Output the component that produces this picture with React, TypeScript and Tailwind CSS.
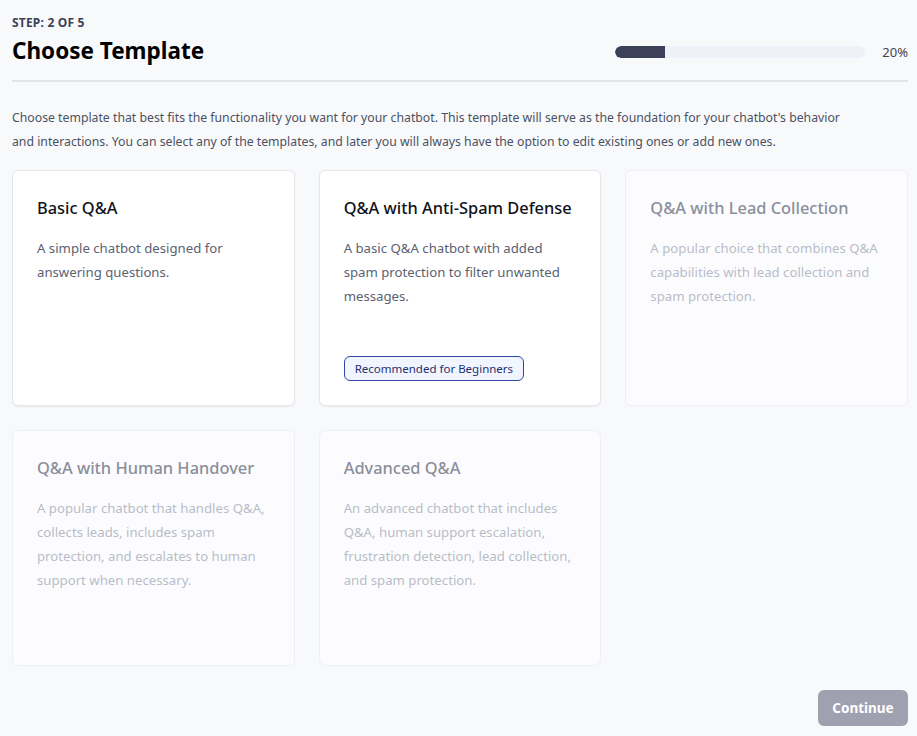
const templates = [
  {
    title: "Basic Q&A",
    description: "A simple chatbot designed for answering questions.",
    enabled: true,
  },
  {
    title: "Q&A with Anti-Spam Defense",
    description: "A basic Q&A chatbot with added spam protection to filter unwanted messages.",
    enabled: true,
    badge: "Recommended for Beginners",
  },
  {
    title: "Q&A with Lead Collection",
    description: "A popular choice that combines Q&A capabilities with lead collection and spam protection.",
    enabled: false,
  },
  {
    title: "Q&A with Human Handover",
    description: "A popular chatbot that handles Q&A, collects leads, includes spam protection, and escalates to human support when necessary.",
    enabled: false,
  },
  {
    title: "Advanced Q&A",
    description: "An advanced chatbot that includes Q&A, human support escalation, frustration detection, lead collection, and spam protection.",
    enabled: false,
  },
];

export default function App() {
  const progress = 20;

  return (
    <div className="min-h-screen bg-[#f8f9fb] font-['Noto_Sans',sans-serif] pl-3 pr-[9px] pt-[15px] pb-[10px]">
      {/* Header */}
      <div className="flex items-end justify-between pb-[14px] border-b-2 border-[#e4e5ea]">
        <div>
          <p className="text-[12px] font-bold uppercase tracking-[0.2px] text-[#3b4257] leading-[16px]">Step: 2 of 5</p>
          <h1 className="text-[22.5px] font-bold text-black leading-[30px] mt-[5px]">Choose Template</h1>
        </div>
        <div className="flex items-center gap-[15px] mb-[4px]">
          <div className="w-[250px] h-[12px] rounded-full bg-[#eef1f7] overflow-hidden">
            <div className="h-full bg-[#3d4059] rounded-l-full" style={{ width: `${progress}%` }} />
          </div>
          <span className="text-[13px] text-[#3f4452] w-[28px] text-right">{progress}%</span>
        </div>
      </div>

      {/* Intro */}
      <p className="mt-[24px] max-w-[830px] text-[12.25px] leading-[24px] text-[#4b5162]">
        Choose template that best fits the functionality you want for your chatbot. This template will serve as the foundation for your chatbot's behavior and interactions. You can select any of the templates, and later you will always have the option to edit existing ones or add new ones.
      </p>

      {/* Template grid */}
      <div className="grid grid-cols-3 gap-6 mt-[16px]">
        {templates.map((t) => (
          <div
            key={t.title}
            className={`h-[236px] flex flex-col rounded-md border p-6 ${
              t.enabled
                ? "bg-white border-[#e6e7eb] shadow-[0_1px_2px_rgba(0,0,0,0.06)]"
                : "bg-[#fcfcfe] border-[#eeeff3]"
            }`}
          >
            <h2
              className={`text-[16.4px] font-medium leading-[26px] whitespace-nowrap ${
                t.enabled ? "text-[#111318]" : "text-[#8b8f9b]"
              }`}
            >
              {t.title}
            </h2>
            <p
              className={`mt-[15px] text-[13.2px] leading-[24px] ${
                t.enabled ? "text-[#5b6272]" : "text-[#b9bdc8]"
              }`}
            >
              {t.description}
            </p>
            {t.badge && (
              <div className="mt-auto">
                <span className="inline-flex items-center h-[25px] px-[10px] rounded-md border border-[#2f47a8] bg-[#f0f5ff] text-[11.5px] text-[#25316f]">
                  {t.badge}
                </span>
              </div>
            )}
          </div>
        ))}
      </div>

      {/* Footer */}
      <div className="flex justify-end mt-[24px]">
        <button className="w-[90px] h-[36px] rounded-md bg-[#9fa1b1] text-white text-[13.5px] font-bold">
          Continue
        </button>
      </div>
    </div>
  );
}
